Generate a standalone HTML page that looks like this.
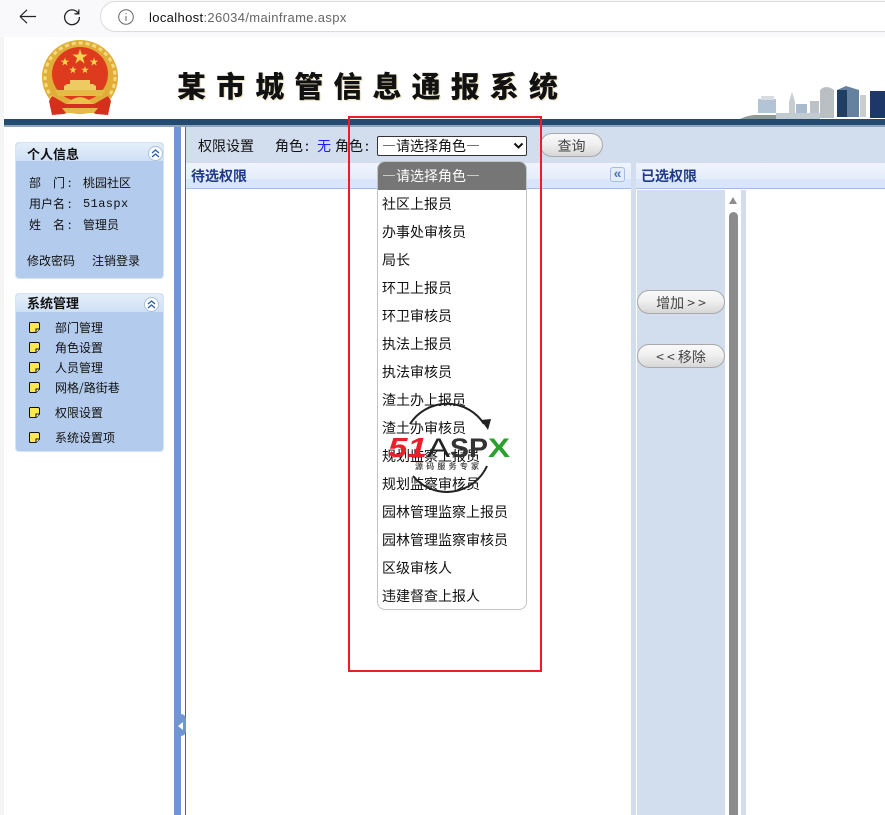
<!DOCTYPE html>
<html lang="zh"><head><meta charset="utf-8"><title>mainframe</title>
<style>
html,body{margin:0;padding:0;background:#fff}
body{width:885px;height:815px;position:relative;overflow:hidden;font:14px/16px "WenQuanYi Zen Hei","Noto Sans CJK SC","Liberation Sans",sans-serif;color:#111}
.a{position:absolute}
.t{position:absolute;white-space:nowrap}
.s{font-size:12px}
.panel{position:absolute;background:#b3cced;border:1px solid #d5e3f5;border-radius:4px;box-sizing:border-box}
.phead{position:absolute;left:0;right:0;top:0;height:18px;background:linear-gradient(#e4eefa,#cfe0f5);border-radius:4px 4px 0 0}
.tog{position:absolute;width:13px;height:13px;border-radius:50%;background:#fff;border:1px solid #a9bfdc}
.note{position:absolute;left:29px;width:11px;height:11px}
.opt{position:absolute;left:4px;white-space:nowrap;font-size:14px;line-height:16px}
.btn{position:absolute;box-sizing:border-box;border:1px solid #a9a9a9;border-radius:12px;background:linear-gradient(#f9f9f9,#f0f0f0 45%,#d6d6d6);text-align:center;color:#444;font-size:14px}
</style></head><body>

<svg width="0" height="0" style="position:absolute"><defs>
<polygon id="star" points="0,-1 .224,-.309 .951,-.309 .363,.118 .588,.809 0,.382 -.588,.809 -.363,.118 -.951,-.309 -.224,-.309"/>
<g id="nt"><path d="M1.500 .5H9Q10.500 .5 10.500 2V7L7 10.500H1.500Q.5 10.500 .5 9.500V1.500Q.5 .5 1.500 .5Z" fill="#fde84f" stroke="#111"/><path d="M10.500 7H7V10.500" fill="#fff" stroke="#111"/></g>
</defs></svg>

<!-- browser bar -->
<div class="a" style="left:0;top:0;width:885px;height:37px;background:#f9f9fb"></div>
<svg class="a" style="left:18px;top:7px" width="20" height="20" viewBox="0 0 20 20" fill="none" stroke="#222" stroke-width="1.200"><path d="M2 9.500H18M2 9.500L9 2.800M2 9.500L9 16.200"/></svg>
<svg class="a" style="left:62px;top:7px" width="20" height="20" viewBox="0 0 20 20" fill="none" stroke="#222" stroke-width="1.300"><path d="M16.300 6.400A7.400 7.400 0 1 0 17.400 10M16.800 2.500V6.800H12.500"/></svg>
<div class="a" style="left:100px;top:1px;width:800px;height:31px;box-sizing:border-box;border:1px solid #dcdcdc;border-radius:16px;background:#fff"></div>
<svg class="a" style="left:117px;top:8px" width="18" height="18" viewBox="0 0 18 18" fill="none" stroke="#666"><circle cx="9" cy="9" r="7.300"/><path d="M9 8V13M9 5V6.200"/></svg>
<div class="t" style="left:149px;top:9px;font:13px/17px 'Liberation Sans',sans-serif;letter-spacing:.35px;color:#666"><span style="color:#111">localhost</span>:26034/mainframe.aspx</div>

<!-- page header -->
<div class="a" style="left:4px;top:37px;width:881px;height:82px;background:#fff;border-radius:8px 0 0 0"></div>
<div class="a" style="left:0;top:37px;width:4px;height:778px;background:#f5f5f5"></div>
<svg class="a" style="left:40px;top:38px" width="80" height="80" viewBox="0 0 80 80">
<ellipse cx="40" cy="39" rx="38" ry="37" fill="#e0ae38"/>
<ellipse cx="40" cy="39" rx="35" ry="34" fill="none" stroke="#f4da7e" stroke-width="3" stroke-dasharray="4 3"/>
<ellipse cx="40" cy="36" rx="28" ry="27" fill="#de3a1e"/>
<path d="M12 58L9 63L12 77L24 76L31 73H49L56 76L68 77L71 63L68 58L54 66H26Z" fill="#d5301b"/>
<g fill="#f3d34f"><use href="#star" transform="translate(40,19) scale(8)"/><use href="#star" transform="translate(25,24) scale(4.500)"/><use href="#star" transform="translate(54,24) scale(4.500)"/><use href="#star" transform="translate(33,32) scale(4)"/><use href="#star" transform="translate(45,32) scale(4)"/></g>
<path d="M27 46L24 48V52H56V48L53 46H50V42H30V46Z" fill="#eecb62"/><path d="M15 52H65L62 58H18Z" fill="#e6bb45"/>
<path d="M27 66Q40 52 53 66Z" fill="#eac24a"/><path d="M22 70H58L54 75H26Z" fill="#e6bb45"/>
</svg>
<div class="t" style="left:177px;top:68px;font:900 29px/34px 'Noto Sans CJK SC','WenQuanYi Zen Hei',sans-serif;letter-spacing:10.100px;color:#111;text-shadow:1px 1px 1px #e9dfb9">某市城管信息通报系统</div>

<!-- skyline -->
<svg class="a" style="left:740px;top:84px" width="145" height="36" viewBox="0 0 145 36">
<path d="M0 35Q6 32 14 31H80V35Z" fill="#8d9a96"/>
<rect x="18" y="15" width="18" height="14" fill="#b3c4d6"/><rect x="21" y="12" width="13" height="4" fill="#d7dde3"/>
<path d="M49 18L52 8L55 18V29H49Z" fill="#c9ccce"/><rect x="56" y="20" width="11" height="9" fill="#a9bacd"/>
<rect x="70" y="17" width="9" height="17" fill="#bcc3c8"/><path d="M80 6Q86 0 94 6V34H80Z" fill="#b9bfc3"/>
<path d="M97 6L106 2L119 6V33H97Z" fill="#64829f"/><path d="M97 6H107V33H97Z" fill="#1f3f63"/><rect x="120" y="11" width="6" height="22" fill="#c8cdd0"/>
<rect x="130" y="7" width="15" height="27" fill="#1d3868"/><rect x="36" y="29" width="44" height="6" fill="#c2cbd0"/>
</svg>
<div class="a" style="left:4px;top:119px;width:881px;height:6px;background:#234a70"></div>
<div class="a" style="left:4px;top:125px;width:881px;height:2px;background:#8fa4bb"></div>

<!-- sidebar -->
<div class="a" style="left:4px;top:127px;width:170px;height:688px;background:#fff"></div>
<div class="a" style="left:174px;top:127px;width:7px;height:688px;background:#7096d1"></div>
<div class="a" style="left:181px;top:127px;width:4px;height:688px;background:#fff"></div>
<div class="a" style="left:185px;top:127px;width:1px;height:688px;background:#3f68b8"></div>
<div class="a" style="left:176px;top:714px;width:10px;height:22px;background:#7096d1;border-radius:5px"></div>
<div class="a" style="left:178px;top:722px;width:0;height:0;border:4px solid transparent;border-left:0;border-right:5px solid #fff"></div>

<div class="panel" style="left:15px;top:142px;width:149px;height:137px">
<div class="phead"></div>
<div class="tog" style="left:132px;top:3px"></div>
<svg class="a" style="left:134px;top:5px" width="11" height="11" fill="none" stroke="#2a5cb3" stroke-width="1.300"><path d="M2 5L5.500 2L9 5M2 9L5.500 6L9 9"/></svg>
</div>
<div class="t" style="left:27px;top:146px;font-size:13px;font-weight:700">个人信息</div>
<div class="t s" style="left:29px;top:175px">部&emsp;门<span style="margin-left:3px">:</span></div><div class="t s" style="left:83px;top:175px">桃园社区</div>
<div class="t s" style="left:29px;top:196px">用户名<span style="margin-left:3px">:</span></div><div class="t" style="left:83px;top:196px;font:12px/16px 'Liberation Mono',monospace;letter-spacing:.4px">51aspx</div>
<div class="t s" style="left:29px;top:217px">姓&emsp;名<span style="margin-left:3px">:</span></div><div class="t s" style="left:83px;top:217px">管理员</div>
<div class="t s" style="left:27px;top:253px">修改密码</div><div class="t s" style="left:92px;top:253px">注销登录</div>

<div class="panel" style="left:15px;top:293px;width:149px;height:159px">
<div class="phead"></div>
<div class="tog" style="left:128px;top:3px"></div>
<svg class="a" style="left:130px;top:5px" width="11" height="11" fill="none" stroke="#2a5cb3" stroke-width="1.300"><path d="M2 5L5.500 2L9 5M2 9L5.500 6L9 9"/></svg>
</div>
<div class="t" style="left:27px;top:295px;font-size:13px;font-weight:700">系统管理</div>
<svg class="note" style="top:322px"><use href="#nt"/></svg><div class="t s" style="left:55px;top:320px">部门管理</div>
<svg class="note" style="top:342px"><use href="#nt"/></svg><div class="t s" style="left:55px;top:340px">角色设置</div>
<svg class="note" style="top:362px"><use href="#nt"/></svg><div class="t s" style="left:55px;top:360px">人员管理</div>
<svg class="note" style="top:382px"><use href="#nt"/></svg><div class="t s" style="left:55px;top:380px">网格/路街巷</div>
<svg class="note" style="top:407px"><use href="#nt"/></svg><div class="t s" style="left:55px;top:405px">权限设置</div>
<svg class="note" style="top:432px"><use href="#nt"/></svg><div class="t s" style="left:55px;top:430px">系统设置项</div>

<!-- toolbar -->
<div class="a" style="left:186px;top:127px;width:699px;height:36px;background:#d2deee"></div>
<div class="t" style="left:198px;top:138px">权限设置</div>
<div class="t" style="left:275px;top:138px">角色<span style="margin-left:2px">:</span></div>
<div class="t" style="left:317px;top:138px;color:#1b1bff">无</div>
<div class="t" style="left:335px;top:138px">角色<span style="margin-left:2px">:</span></div>
<div class="a" style="left:377px;top:136px;width:150px;height:20px;box-sizing:border-box;border:1px solid #333;border-radius:2px;background:#fff"></div>
<div class="t" style="left:382px;top:138px">—请选择角色—</div>
<svg class="a" style="left:513px;top:142px" width="11" height="8" fill="none" stroke="#111" stroke-width="2"><path d="M1.500 1.500L5.500 5.500L9.500 1.500"/></svg>
<div class="btn" style="left:540px;top:133px;width:63px;height:24px;line-height:24px">查询</div>

<!-- left list head -->
<div class="a" style="left:186px;top:163px;width:445px;height:26px;background:linear-gradient(#eff4fc 0,#e5edfa 65%,#d9e5f9 65%);border-bottom:1px solid #a5bde6;box-sizing:border-box"></div>
<div class="t" style="left:191px;top:168px;font-weight:700;color:#1f3a8a">待选权限</div>
<div class="a" style="left:610px;top:167px;width:15px;height:15px;box-sizing:border-box;border:1px solid #a5bde6;border-radius:3px;background:#e4edfb;color:#5074b8;font:700 14px/11px 'Liberation Sans',sans-serif;text-align:center">«</div>

<!-- gutter -->
<div class="a" style="left:631px;top:163px;width:5px;height:652px;background:#d2deee"></div>
<!-- right head -->
<div class="a" style="left:636px;top:163px;width:249px;height:26px;background:linear-gradient(#eff4fc 0,#e5edfa 65%,#d9e5f9 65%);border-bottom:1px solid #a5bde6;box-sizing:border-box"></div>
<div class="t" style="left:641px;top:168px;font-weight:700;color:#1f3a8a">已选权限</div>
<div class="a" style="left:637px;top:190px;width:88px;height:625px;background:#d2deee"></div>
<div class="btn" style="left:637px;top:290px;width:88px;height:24px;line-height:24px;white-space:pre">增加 &gt; &gt;</div>
<div class="btn" style="left:637px;top:344px;width:88px;height:24px;line-height:24px;white-space:pre">&lt; &lt; 移除</div>
<!-- scrollbar -->
<div class="a" style="left:729px;top:197px;width:0;height:0;border-left:4.500px solid transparent;border-right:4.500px solid transparent;border-bottom:7px solid #8c8c8c"></div>
<div class="a" style="left:729px;top:212px;width:9px;height:603px;background:#8c8c8c;border-radius:5px 5px 0 0"></div>
<div class="a" style="left:741px;top:190px;width:5px;height:625px;background:#d2deee"></div>

<!-- dropdown -->
<div class="a" style="left:377px;top:161px;width:150px;height:449px;box-sizing:border-box;border:1px solid #c4c4c4;border-radius:8px;background:#fff;overflow:hidden">
<div class="a" style="left:0;top:0;width:148px;height:28px;background:#767676"></div>
<div class="opt" style="top:6px;color:#fff">—请选择角色—</div>
<div class="opt" style="top:34px">社区上报员</div>
<div class="opt" style="top:62px">办事处审核员</div>
<div class="opt" style="top:90px">局长</div>
<div class="opt" style="top:118px">环卫上报员</div>
<div class="opt" style="top:146px">环卫审核员</div>
<div class="opt" style="top:174px">执法上报员</div>
<div class="opt" style="top:202px">执法审核员</div>
<div class="opt" style="top:230px">渣土办上报员</div>
<div class="opt" style="top:258px">渣土办审核员</div>
<div class="opt" style="top:286px">规划监察上报员</div>
<div class="opt" style="top:314px">规划监察审核员</div>
<div class="opt" style="top:342px">园林管理监察上报员</div>
<div class="opt" style="top:370px">园林管理监察审核员</div>
<div class="opt" style="top:398px">区级审核人</div>
<div class="opt" style="top:426px">违建督查上报人</div>
</div>

<!-- watermark -->
<svg class="a" style="left:385px;top:400px" width="130" height="96" viewBox="0 0 130 96">
<path d="M25 24A44 44 0 0 1 99 24M102 66A44 44 0 0 1 28 76" fill="none" stroke="#222" stroke-width="2"/>
<path d="M96 20L103 30L106 19Z" fill="#222"/>
<text x="3" y="57" font-family="Liberation Sans" font-weight="700" font-style="italic" font-size="28" fill="#e8202a" textLength="39" lengthAdjust="spacingAndGlyphs">51</text>
<text x="42" y="57" font-family="Liberation Sans" font-size="27" fill="#222" textLength="23" lengthAdjust="spacingAndGlyphs">A</text>
<text x="65" y="57" font-family="Liberation Sans" font-weight="700" font-size="27" fill="#333" textLength="38" lengthAdjust="spacingAndGlyphs">SP</text>
<text x="103" y="57" font-family="Liberation Sans" font-weight="700" font-size="27" fill="#2ca02c" textLength="22" lengthAdjust="spacingAndGlyphs">X</text>
<text x="30" y="69" font-family="Noto Sans CJK SC" font-weight="700" font-size="8" fill="#555" letter-spacing="3.200">源码服务专家</text>
</svg>

<!-- red annotation -->
<div class="a" style="left:348px;top:116px;width:194px;height:556px;box-sizing:border-box;border:2px solid #ee1c25"></div>
</body></html>
